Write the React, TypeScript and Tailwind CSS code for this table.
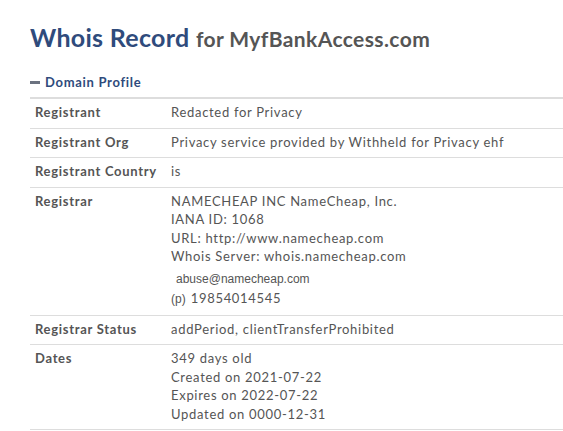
import React from "react"

const rows: { label: string; lines: string[] }[] = [
  { label: "Registrant", lines: ["Redacted for Privacy"] },
  { label: "Registrant Org", lines: ["Privacy service provided by Withheld for Privacy ehf"] },
  { label: "Registrant Country", lines: ["is"] },
]

function Row({ label, children }: { label: string; children: React.ReactNode }) {
  return (
    <div className="flex border-b border-[#dddddd] pt-[4px] pb-[6px] leading-[18.5px]">
      <div className="w-[141px] shrink-0 pl-[5px] font-bold">{label}</div>
      <div className="flex flex-col">{children}</div>
    </div>
  )
}

export default function App() {
  return (
    <div className="min-h-[431px] bg-white pl-[30px] pt-[22px] text-[13px] tracking-[0.7px] text-[#555555] [font-family:Lato,'Noto_Sans',sans-serif]">
      <h1 className="text-[25px] leading-[30px] font-bold tracking-[0.3px] text-[#2f4b7c]">
        Whois Record{" "}
        <span className="text-[21px] tracking-[0.4px] text-[#555555]">for MyfBankAccess.com</span>
      </h1>

      {/* Domain Profile */}
      <div className="mt-[19px] flex items-center gap-[5px] text-[13px] leading-[18px] font-bold text-[#2f4b7c]">
        <span className="h-[3px] w-[10px] bg-[#6b7280]" />
        Domain Profile
      </div>

      <div className="mt-[6px] border-t-[2px] border-[#dddddd]">
        {rows.map((r) => (
          <Row key={r.label} label={r.label}>
            {r.lines.map((l) => (
              <span key={l}>{l}</span>
            ))}
          </Row>
        ))}

        <Row label="Registrar">
          <span>NAMECHEAP INC NameCheap, Inc.</span>
          <span>IANA ID: 1068</span>
          <span>URL: http://www.namecheap.com</span>
          <span>Whois Server: whois.namecheap.com</span>
          <span className="mt-[4px] pl-[5px] text-[12px] leading-[19px] tracking-normal [font-family:'Liberation_Sans',Arial,sans-serif]">
            abuse@namecheap.com
          </span>
          <span className="leading-[19px]">
            <span className="text-[12px] tracking-normal [font-family:'Liberation_Sans',Arial,sans-serif]">(p)</span>
            <span className="ml-[5px]">19854014545</span>
          </span>
        </Row>

        <Row label="Registrar Status">
          <span>addPeriod, clientTransferProhibited</span>
        </Row>

        <Row label="Dates">
          <span>349 days old</span>
          <span>Created on 2021-07-22</span>
          <span>Expires on 2022-07-22</span>
          <span>Updated on 0000-12-31</span>
        </Row>
      </div>
    </div>
  )
}
